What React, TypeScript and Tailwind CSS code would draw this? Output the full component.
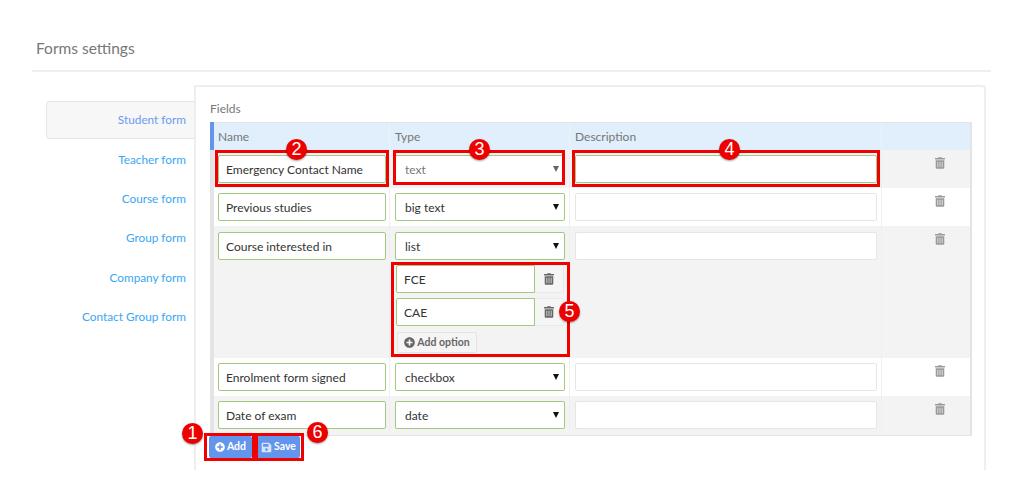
import type { ReactNode } from 'react';
import { FaPlusCircle, FaSave, FaTrashAlt } from 'react-icons/fa';

const tabs = ['Student form', 'Teacher form', 'Course form', 'Group form', 'Company form', 'Contact Group form'];

// red annotation frame drawn over a control
function Frame({ className }: { className: string }) {
  return <div className={`absolute pointer-events-none border-[3px] border-[#f00000] ${className}`} />;
}

function Badge({ n, className }: { n: number; className: string }) {
  return (
    <div
      className={`absolute z-10 w-[21px] h-[21px] rounded-full bg-[#ee0000] text-white text-[18px] leading-[21px] text-center font-['Liberation_Sans',sans-serif] shadow-[0_1px_2px_rgba(0,0,0,0.4)] ${className}`}
    >
      {n}
    </div>
  );
}

function TextInput({ value = '', className = '' }: { value?: string; className?: string }) {
  return (
    <input
      readOnly
      value={value}
      className={`block h-[28px] w-full bg-white border rounded-[2px] px-[7px] text-[12px] text-[#333] outline-none ${className || 'border-[#a3c87f]'}`}
    />
  );
}

function SelectBox({ value, muted = false }: { value: string; muted?: boolean }) {
  return (
    <div className="relative h-[28px] bg-white border border-[#a3c87f] rounded-[2px] pl-[9px] pt-[2px] flex items-center text-[12px]">
      <span className={muted ? 'text-[#777]' : 'text-[#333]'}>{value}</span>
      <div
        className={`absolute right-[5px] top-[10px] w-0 h-0 border-x-[3.5px] border-x-transparent border-t-[6px] ${
          muted ? 'border-t-[#666]' : 'border-t-[#111]'
        }`}
      />
    </div>
  );
}

function Row({ striped, h, top = 'pt-[5px]', name, type, children }: { striped: boolean; h: string; top?: string; name: ReactNode; type: ReactNode; children?: ReactNode }) {
  return (
    <div className={`flex ${h} ${striped ? 'bg-[#f3f3f3]' : 'bg-white'}`}>
      <div className={`w-[176px] pl-1 pr-[3px] border-r border-[#efefef] ${top}`}>{name}</div>
      <div className={`w-[180px] pl-[5px] pr-[4px] border-r border-[#efefef] ${top}`}>{type}</div>
      <div className={`w-[312px] pl-[5px] pr-[4px] border-r border-[#efefef] ${top}`}>{children}</div>
      <div className="flex-1 flex justify-center pl-[28px] pt-[7px]">
        <FaTrashAlt className="w-[10px] h-[12px] text-[#999]" />
      </div>
    </div>
  );
}

function OptionInput({ value }: { value: string }) {
  return (
    <div className="flex h-[28px] ml-[1px]">
      <div className="w-[139px]">
        <TextInput value={value} className="border-[#a3c87f] rounded-r-none" />
      </div>
      <div className="w-[29px] flex items-center justify-center bg-[#f5f5f5] border border-l-0 border-[#e8e8e8] rounded-r-[2px]">
        <FaTrashAlt className="w-[10px] h-[12px] text-[#666]" />
      </div>
    </div>
  );
}

export default function App() {
  return (
    <div className="w-[1024px] h-[500px] overflow-hidden bg-white font-['Lato',sans-serif] px-[32px] pt-[38px]">
      <div className="h-[34px] border-b-2 border-[#eeeeee] mr-[1px]">
        <h1 className="pl-1 text-[15.5px] leading-[21px] text-[#777]">Forms settings</h1>
      </div>

      <div className="flex mt-[13px] ml-[14px]">
        {/* Tabs */}
        <div className="w-[148px] pt-[16px] text-[11.8px] text-right text-[#3aa6f5]">
          {tabs.map((t, i) => (
            <div
              key={t}
              className={
                i === 0
                  ? 'h-[37.5px] leading-[36px] pr-[8px] mb-[2px] text-[#6b9af0] bg-[#f7f7f7] border border-r-0 border-[#e6e6e6] rounded-l-[4px]'
                  : 'h-[39.4px] leading-[37px] pr-[8px]'
              }
            >
              {t}
            </div>
          ))}
        </div>

        {/* Panel */}
        <div className="w-[792px] h-[385px] border-l-2 border-t-2 border-r-2 border-[#eeeeee] rounded-tr-[4px] bg-white pl-[14px] pt-[14px]">
          <div className="text-[12px] leading-[15px] text-[#777] mb-[6px]">Fields</div>

          <div className="relative w-[762px] border-l-[4px] border-r-2 border-t border-b border-[#e4e4e4]">
            <div className="absolute -left-[4px] -top-px w-[4px] h-[28px] bg-[#6495ed]" />

            <div className="flex h-[27px] bg-[#e1eefb] text-[12px] text-[#777] leading-[27px]">
              <div className="w-[176px] px-1 border-r border-[#ecf2f9]">Name</div>
              <div className="w-[180px] pl-[5px] border-r border-[#ecf2f9]">Type</div>
              <div className="w-[312px] pl-[5px] border-r border-[#ecf2f9]">Description</div>
            </div>

            <Row
              striped
              h="h-[38px]"
              name={
                <div className="relative">
                  <TextInput value="Emergency Contact Name" />
                  <Frame className="-inset-x-[3px] -top-[5px] -bottom-[4px]" />
                  <Badge n={2} className="left-[68px] -top-[16px]" />
                </div>
              }
              type={
                <div className="relative">
                  <SelectBox value="text" muted />
                  <Frame className="-left-[2px] right-0 -top-[5px] -bottom-[2px]" />
                  <Badge n={3} className="left-[74px] -top-[16px]" />
                </div>
              }
            >
              <div className="relative">
                <TextInput />
                <Frame className="-inset-x-[3px] -top-[5px] -bottom-[4px]" />
                <Badge n={4} className="left-[144px] -top-[16px]" />
              </div>
            </Row>

            <Row h="h-[38px]" striped={false} name={<TextInput value="Previous studies" />} type={<SelectBox value="big text" />}>
              <TextInput className="border-[#e6e6e6]" />
            </Row>

            <Row
              striped
              h="h-[132px]"
              top="pt-[6px]"
              name={<TextInput value="Course interested in" />}
              type={
                <div className="relative">
                  <SelectBox value="list" />
                  <div className="pt-[5px] flex flex-col gap-[5px]">
                    <OptionInput value="FCE" />
                    <OptionInput value="CAE" />
                    <div className="ml-[2px] mt-px w-[80px] h-[21px] flex items-center justify-center gap-[2px] bg-[#f5f5f5] border border-[#e4e4e4] rounded-[2px] text-[10.5px] font-bold text-[#666]">
                      <FaPlusCircle className="w-[11px] h-[11px]" />
                      Add option
                    </div>
                  </div>
                  <Frame className="-left-[4px] -right-[5px] top-[30px] h-[95px]" />
                  <Badge n={5} className="left-[164px] top-[69px]" />
                </div>
              }
            >
              <TextInput className="border-[#e6e6e6]" />
            </Row>

            <Row h="h-[38px]" striped={false} name={<TextInput value="Enrolment form signed" />} type={<SelectBox value="checkbox" />}>
              <TextInput className="border-[#e6e6e6]" />
            </Row>

            <Row striped h="h-[39px]" name={<TextInput value="Date of exam" />} type={<SelectBox value="date" />}>
              <TextInput className="border-[#e6e6e6]" />
            </Row>
          </div>

          <div className="flex gap-[5px] -ml-[1px]">
            <div className="relative">
              <div className="w-[43px] h-[22px] flex items-center justify-center gap-[2px] bg-[#6495ed] rounded-[2px] text-white text-[10.5px] font-bold">
                <FaPlusCircle className="w-[10px] h-[10px]" />
                Add
              </div>
              <Frame className="-left-[5px] -right-[3px] -inset-y-[3px]" />
              <Badge n={1} className="-left-[27px] -top-[13px]" />
            </div>
            <div className="relative">
              <div className="w-[43px] h-[22px] flex items-center justify-center gap-[2px] bg-[#6495ed] rounded-[2px] text-white text-[10.5px] font-bold">
                <FaSave className="w-[11px] h-[11px] text-[#d8e4fa]" />
                Save
              </div>
              <Frame className="-left-[2px] -right-[4px] -inset-y-[3px]" />
              <Badge n={6} className="left-[50px] -top-[14px]" />
            </div>
          </div>
        </div>
      </div>
    </div>
  );
}
